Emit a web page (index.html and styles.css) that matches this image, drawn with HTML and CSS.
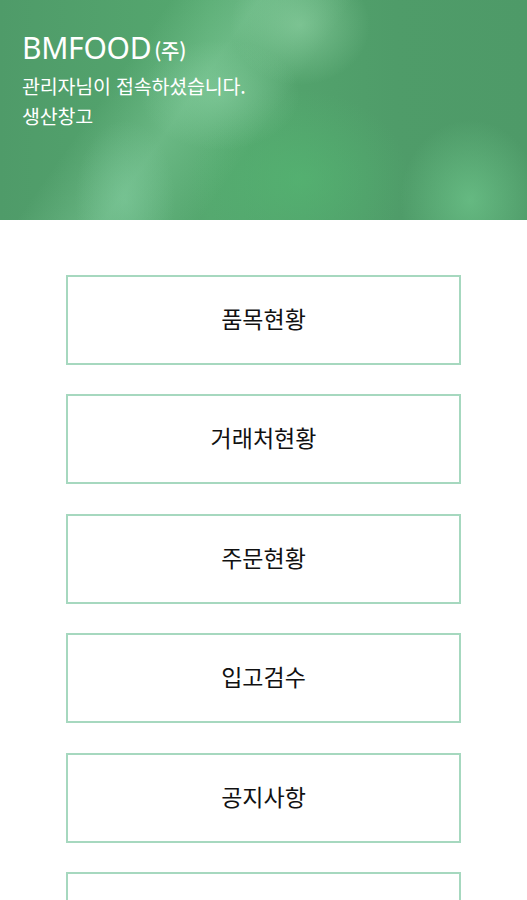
FILE: index.html
```html
<!DOCTYPE html>
<html lang="ko">
<head>
<meta charset="utf-8">
<link rel="stylesheet" href="styles.css">
</head>
<body>
<header class="hero">
  <h1 class="brand">BMFOOD<span class="brand-suffix">(주)</span></h1>
  <p class="hero-line">관리자님이 접속하셨습니다.</p>
  <p class="hero-line">생산창고</p>
</header>
<main class="menu">
  <a class="menu-item">품목현황</a>
  <a class="menu-item">거래처현황</a>
  <a class="menu-item">주문현황</a>
  <a class="menu-item">입고검수</a>
  <a class="menu-item">공지사항</a>
  <a class="menu-item">&nbsp;</a>
</main>
</body>
</html>
```
FILE: styles.css
```css
html, body {
  margin: 0;
  padding: 0;
  background: #ffffff;
  font-family: "Noto Sans CJK KR", "Noto Sans", sans-serif;
}
body {
  overflow: hidden;
  height: 900px;
}
.hero {
  height: 220px;
  box-sizing: border-box;
  padding: 28px 22px 0;
  color: #ffffff;
  background-color: #4f9e69;
  background-image:
    radial-gradient(ellipse 70px 60px at 300px 25px, rgba(150, 215, 170, 0.55), rgba(150, 215, 170, 0) 100%),
    radial-gradient(ellipse 80px 55px at 220px 95px, rgba(140, 210, 165, 0.5), rgba(140, 210, 165, 0) 100%),
    radial-gradient(ellipse 50px 80px at 125px 200px, rgba(130, 205, 160, 0.5), rgba(130, 205, 160, 0) 100%),
    radial-gradient(ellipse 70px 80px at 470px 200px, rgba(120, 210, 150, 0.55), rgba(120, 210, 150, 0) 100%),
    radial-gradient(ellipse 110px 90px at 300px 180px, rgba(85, 185, 115, 0.6), rgba(85, 185, 115, 0) 100%),
    linear-gradient(125deg, rgba(255, 255, 255, 0) 25%, rgba(150, 220, 175, 0.35) 38%, rgba(255, 255, 255, 0) 52%),
    linear-gradient(90deg, #4f9b69 0%, #55a86f 40%, #4f9c69 75%, #4e9a68 100%);
}
.brand {
  margin: 0;
  font-family: "Noto Sans", "Noto Sans CJK KR", sans-serif;
  font-weight: 400;
  font-size: 30px;
  line-height: 40px;
  letter-spacing: -0.3px;
}
.brand-suffix {
  font-family: "Noto Sans CJK KR", sans-serif;
  font-size: 20px;
  font-weight: 500;
  margin-left: 3px;
}
.hero-line {
  margin: 0;
  font-size: 19.5px;
  line-height: 30px;
  letter-spacing: -0.2px;
}
.menu {
  display: flex;
  flex-direction: column;
  align-items: center;
  gap: 29.4px;
  padding-top: 55px;
}
.menu-item {
  display: flex;
  align-items: center;
  justify-content: center;
  width: 395px;
  height: 90px;
  box-sizing: border-box;
  padding-bottom: 4px;
  border: 2px solid #a6d8bf;
  color: #111111;
  font-size: 23px;
  letter-spacing: 0;
  text-decoration: none;
  flex-shrink: 0;
}
```
